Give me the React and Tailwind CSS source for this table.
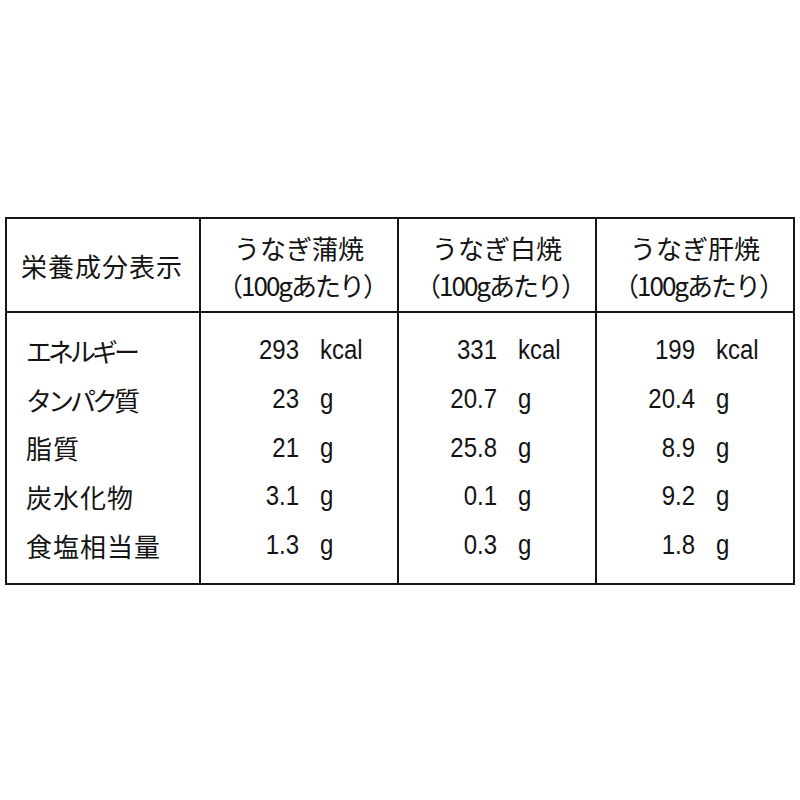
const jp = "font-['Noto_Sans_CJK_JP',sans-serif]";
const num = "font-['Liberation_Sans','Noto_Sans_CJK_JP',sans-serif]";

// katakana in the source are set proportional, so squeeze those rows
const labels = [
  { text: "エネルギー", cls: "tracking-[-4px]" },
  { text: "タンパク質", cls: "tracking-[-4px]" },
  { text: "脂質", cls: "tracking-[1px]" },
  { text: "炭水化物", cls: "tracking-[1px]" },
  { text: "食塩相当量", cls: "tracking-[1px]" },
];

const columns = [
  {
    name: "うなぎ蒲焼",
    values: [["293", "kcal"], ["23", "g"], ["21", "g"], ["3.1", "g"], ["1.3", "g"]],
  },
  {
    name: "うなぎ白焼",
    values: [["331", "kcal"], ["20.7", "g"], ["25.8", "g"], ["0.1", "g"], ["0.3", "g"]],
  },
  {
    name: "うなぎ肝焼",
    values: [["199", "kcal"], ["20.4", "g"], ["8.9", "g"], ["9.2", "g"], ["1.8", "g"]],
  },
];

function ValueCell({ values, last }) {
  return (
    <div className={`flex flex-col pt-[13px] ${last ? "" : "border-r-2 border-[#161616]"}`}>
      {values.map(([v, unit], i) => (
        <div key={i} className={`flex h-[48.7px] items-center text-[24px] ${num}`}>
          <span className="w-[98px] scale-y-[1.16] text-right">{v}</span>
          <span className="ml-[21px] scale-y-[1.16]">{unit}</span>
        </div>
      ))}
    </div>
  );
}

export default function App() {
  return (
    <div className="min-h-[800px] w-[800px] bg-white pt-[217px] text-[#141414]">
      <div className="ml-[5px] w-[790px] border-2 border-[#161616]">
        {/* header */}
        <div className="grid h-[94px] grid-cols-[194px_198px_198px_1fr] border-b-2 border-[#161616]">
          <div className={`flex items-center border-r-2 border-[#161616] pl-[14px] text-[26px] tracking-[1px] ${jp}`}>
            栄養成分表示
          </div>
          {columns.map((c, i) => (
            <div
              key={c.name}
              className={`flex flex-col items-center justify-center pt-[2px] text-[26px] leading-[37px] ${jp} ${
                i < 2 ? "border-r-2 border-[#161616]" : ""
              }`}
            >
              <span>{c.name}</span>
              <span className="pl-[6px] tracking-[-2px]">（100gあたり）</span>
            </div>
          ))}
        </div>

        {/* body */}
        <div className="grid h-[270px] grid-cols-[194px_198px_198px_1fr]">
          <div className={`flex flex-col border-r-2 border-[#161616] pl-[19px] pt-[13px] text-[26px] ${jp}`}>
            {labels.map((l) => (
              <div key={l.text} className={`flex h-[48.7px] items-center ${l.cls}`}>
                {l.text}
              </div>
            ))}
          </div>
          {columns.map((c, i) => (
            <ValueCell key={c.name} values={c.values} last={i === 2} />
          ))}
        </div>
      </div>
    </div>
  );
}
